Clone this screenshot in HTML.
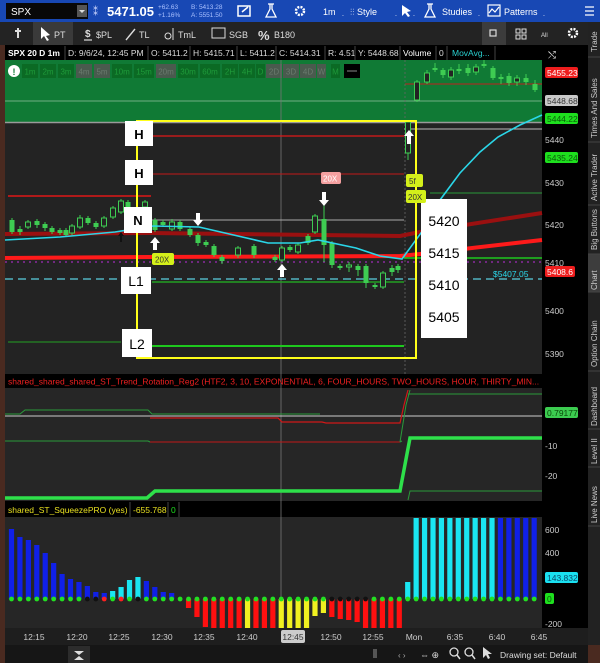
<!DOCTYPE html>
<html><head><meta charset="utf-8"><style>
html,body{margin:0;padding:0;background:#1a1a1a;width:600px;height:663px;overflow:hidden}
svg{display:block}
text{font-family:"Liberation Sans",sans-serif}
</style></head><body>
<svg id="s" width="600" height="663" viewBox="0 0 600 663" xmlns="http://www.w3.org/2000/svg">
<!-- backgrounds -->
<rect x="0" y="0" width="600" height="663" fill="#4a2a20"/>
<rect x="0" y="0" width="600" height="22" fill="#1848b4"/>
<rect x="0" y="22" width="588" height="23" fill="#232323"/>
<rect x="33" y="22" width="40" height="23" fill="#3a3a3a"/>
<rect x="482" y="22" width="24" height="23" fill="#3c3c3c"/>
<rect x="5" y="45" width="537" height="15" fill="#000"/>
<rect x="542" y="45" width="46" height="600" fill="#000"/>
<rect x="588" y="22" width="12" height="623" fill="#222"/>
<rect x="588" y="254" width="12" height="38" fill="#3d3d3d"/>
<rect x="5" y="60" width="537" height="62" fill="#107a35"/>
<rect x="5" y="122" width="537" height="252" fill="#232323"/>
<rect x="5" y="374" width="537" height="14" fill="#000"/>
<rect x="5" y="388" width="537" height="113" fill="#262626"/>
<rect x="5" y="501" width="537" height="16" fill="#000"/>
<rect x="5" y="517" width="537" height="111" fill="#262626"/>
<rect x="5" y="628" width="583" height="17" fill="#1e1e1e"/>
<rect x="5" y="645" width="583" height="18" fill="#161616"/>
<rect x="68" y="646" width="22" height="17" fill="#2c2c2c"/>

<!-- top bar -->
<rect x="6" y="3" width="82" height="16" fill="#080808"/>
<rect x="77" y="5" width="10" height="12" fill="#555"/>
<path d="M79 10h6l-3 3z" fill="#ddd"/>
<text x="11" y="15" font-size="10" fill="#fff">SPX</text>
<text x="93" y="15" font-size="10" fill="#cfd8ff">⁑</text>
<text x="107" y="16" font-size="13" font-weight="bold" fill="#fff">5471.05</text>
<text x="158" y="9" font-size="6.5" fill="#a9c0ff">+62.63</text>
<text x="158" y="17" font-size="6.5" fill="#a9c0ff">+1.16%</text>
<text x="191" y="9" font-size="6.5" fill="#a9c0ff">B: 5413.28</text>
<text x="191" y="17" font-size="6.5" fill="#a9c0ff">A: 5551.50</text>
<rect x="238" y="6" width="12" height="10" fill="none" stroke="#fff" stroke-width="1.5"/>
<path d="M242 12l6-5" stroke="#fff" stroke-width="1.5"/>
<path d="M268 4h6M270 4v5l-4 8h10l-4-8v-5" fill="none" stroke="#fff" stroke-width="1.3"/>
<circle cx="300" cy="11" r="4" fill="none" stroke="#fff" stroke-width="2.5" stroke-dasharray="2 1.2"/>
<text x="323" y="15" font-size="9" fill="#fff">1m</text>
<text x="342" y="16" font-size="7" fill="#fff">.</text>
<text x="350" y="15" font-size="9" fill="#fff">⫶⫶ Style</text>
<text x="395" y="16" font-size="7" fill="#fff">.</text>
<path d="M402 5l0 11 3-3 3 4 2-1-3-4 4-1z" fill="#fff"/>
<text x="413" y="16" font-size="7" fill="#fff">.</text>
<path d="M427 4h6M429 4v5l-4 8h10l-4-8v-5" fill="none" stroke="#fff" stroke-width="1.3"/>
<text x="442" y="15" font-size="9" fill="#fff">Studies</text>
<text x="478" y="16" font-size="7" fill="#fff">.</text>
<rect x="488" y="5" width="12" height="11" fill="none" stroke="#fff" stroke-width="1.2"/>
<path d="M489 13l3-4 3 3 4-5" fill="none" stroke="#fff" stroke-width="1.2"/>
<text x="504" y="15" font-size="9" fill="#fff">Patterns</text>
<text x="543" y="16" font-size="7" fill="#fff">.</text>
<path d="M585 7h9M585 11h9M585 15h9" stroke="#fff" stroke-width="1.3"/>

<!-- toolbar 2 -->
<path d="M18 28v10M15 31h6" stroke="#ddd" stroke-width="2"/>
<path d="M41 27l0 12 3-3 3 5 2-1-3-4 4-1z" fill="#fff"/>
<text x="54" y="38" font-size="9" fill="#ddd">PT</text>
<text x="85" y="37" font-size="10" font-weight="bold" fill="#ddd">$</text>
<path d="M84 40h8" stroke="#ddd" stroke-width="1.2"/>
<text x="96" y="38" font-size="9" fill="#ddd">$PL</text>
<path d="M126 40l9-11" stroke="#ddd" stroke-width="1.4"/>
<text x="139" y="38" font-size="9" fill="#ddd">TL</text>
<circle cx="168" cy="36" r="3" fill="none" stroke="#ddd"/>
<path d="M173 28v12" stroke="#ddd"/>
<text x="178" y="38" font-size="9" fill="#ddd">TmL</text>
<rect x="212" y="28" width="13" height="10" fill="none" stroke="#ddd"/>
<text x="229" y="38" font-size="9" fill="#ddd">SGB</text>
<text x="258" y="40" font-size="13" font-weight="bold" fill="#ddd">%</text>
<text x="274" y="38" font-size="9" fill="#ddd">B180</text>
<rect x="490" y="30" width="6" height="6" fill="none" stroke="#ddd" stroke-width="1.2"/>
<rect x="516" y="29" width="4" height="4" fill="none" stroke="#ddd"/><rect x="522" y="29" width="4" height="4" fill="none" stroke="#ddd"/>
<rect x="516" y="35" width="4" height="4" fill="none" stroke="#ddd"/><rect x="522" y="35" width="4" height="4" fill="none" stroke="#ddd"/>
<text x="541" y="37" font-size="6" fill="#ddd">All</text>
<circle cx="573" cy="33" r="4" fill="none" stroke="#fff" stroke-width="2.5" stroke-dasharray="2 1.2"/>

<!-- info row -->
<g font-size="8.5" fill="#ddd">
<text x="8" y="56" font-weight="bold" fill="#fff">SPX 20 D 1m</text>
<text x="68" y="56">D: 9/6/24, 12:45 PM</text>
<text x="151" y="56">O: 5411.2</text>
<text x="193" y="56">H: 5415.71</text>
<text x="240" y="56">L: 5411.2</text>
<text x="279" y="56">C: 5414.31</text>
<text x="328" y="56">R: 4.51</text>
<text x="358" y="56">Y: 5448.68</text>
<text x="403" y="56" fill="#fff">Volume</text>
<text x="439" y="56">0</text>
<text x="452" y="56" fill="#2ad0d0">MovAvg...</text>
</g>
<g stroke="#444" stroke-width="1">
<path d="M65 46v14M148 46v14M190 46v14M237 46v14M276 46v14M325 46v14M355 46v14M400 46v14M436 46v14M447 46v14M495 46v14"/>
</g>
<text x="548" y="58" font-size="10" fill="#ddd">⤭</text>

<!-- timeframe buttons -->
<circle cx="14" cy="71" r="6" fill="#fff"/>
<text x="12.5" y="75" font-size="9" font-weight="bold" fill="#107a35">!</text>
<g id="tf"></g>

<!-- chart lines -->
<path d="M5 101H542" stroke="#6fae82" stroke-width="1"/>
<path d="M5 122.5H542" stroke="#9a9a9a" stroke-width="1.5"/>
<path d="M405 84H542" stroke="#c02020" stroke-width="1"/>
<path d="M404 129H542" stroke="#bbb" stroke-width="1"/>
<path d="M281 60V628" stroke="#777" stroke-width="0.8"/>
<path d="M405 60V374" stroke="#666" stroke-width="0.8" stroke-dasharray="2 2"/>
<path d="M152 136H404" stroke="#e01818" stroke-width="1.2"/>
<path d="M152 174H404" stroke="#c01818" stroke-width="1"/>
<path d="M8 196H151" stroke="#e01818" stroke-width="1.5"/>
<path d="M152 220H404" stroke="#aaa" stroke-width="1"/>
<path d="M430 193H542" stroke="#2a9a3a" stroke-width="1"/>
<path d="M5 262H542" stroke="#8a2aa0" stroke-width="1.5" stroke-dasharray="2 4"/>
<path d="M5 234L150 233L400 236L420 232L542 213" stroke="#9a1010" stroke-width="4" fill="none"/>
<path d="M5 258L150 257L400 256L420 254L542 240" stroke="#ff1a1a" stroke-width="4" fill="none"/>
<path d="M404 258H542" stroke="#1ec81e" stroke-width="1.5"/>
<path d="M5 279H542" stroke="#5ad0e0" stroke-width="1.2" stroke-dasharray="8 5"/>
<path d="M152 282H404" stroke="#23a023" stroke-width="1.5"/>
<path d="M8 342H121" stroke="#23a023" stroke-width="1"/>
<path d="M152 346H404" stroke="#1ec81e" stroke-width="2"/>
<g id="candles"></g>
<path d="M5 240L60 237L115 232L153 226L199 227L268 243L300 243L318 240L356 248L380 256L402 259L421 233L440 200L460 173L480 152L498 137L520 125L542 115" stroke="#2ad6e8" stroke-width="1.6" fill="none"/>

<!-- yellow box -->
<rect x="137" y="121" width="279" height="237" fill="none" stroke="#ffff1a" stroke-width="2"/>
<!-- label boxes -->
<g font-size="13" font-weight="bold" fill="#000" text-anchor="middle">
<rect x="125" y="121" width="28" height="25" fill="#fff"/><text x="139" y="139">H</text>
<rect x="125" y="160" width="28" height="25" fill="#fff"/><text x="139" y="178">H</text>
<rect x="124" y="207" width="28" height="26" fill="#fff"/><text x="138" y="225">N</text>
<rect x="121" y="267" width="30" height="27" fill="#fff"/><text x="136" y="286" font-weight="normal" font-size="14">L1</text>
<rect x="122" y="329" width="30" height="28" fill="#fff"/><text x="137" y="349" font-weight="normal" font-size="14">L2</text>
<rect x="421" y="199" width="46" height="139" fill="#fff"/>
<g font-size="14" font-weight="normal"><text x="444" y="226">5420</text><text x="444" y="258">5415</text><text x="444" y="290">5410</text><text x="444" y="322">5405</text></g>
</g>
<!-- arrows -->
<g fill="#fff">
<path d="M155 237l-5 6h3v7h4v-7h3z"/>
<path d="M282 264l-5 6h3v7h4v-7h3z"/>
<path d="M409 130l-5 6h3v8h4v-8h3z"/>
<path d="M198 226l-5-6h3v-7h4v7h3z"/>
<path d="M324 206l-5-6h3v-8h4v8h3z"/>
</g>
<path d="M121 232l-3 4h2v6h2v-6h2z" fill="#111"/>
<rect x="152" y="253" width="22" height="12" rx="2" fill="#d4f01a"/>
<text x="155" y="262.5" font-size="8" fill="#333">20X</text>
<rect x="321" y="172" width="20" height="12" rx="2" fill="#f4a0a0"/>
<text x="323" y="181.5" font-size="8" fill="#fff">20X</text>
<rect x="406" y="174" width="17" height="13" rx="2" fill="#d4f01a"/>
<text x="409" y="184" font-size="8" fill="#333">5f</text>
<rect x="406" y="190" width="20" height="13" rx="2" fill="#d4f01a"/>
<text x="408" y="200" font-size="8" fill="#333">20X</text>

<!-- price axis -->
<g font-size="8.5">
<rect x="545" y="67" width="33" height="11" rx="2" fill="#ee1d1d"/><text x="547" y="76" fill="#fff">5455.23</text>
<rect x="545" y="95" width="33" height="11" rx="2" fill="#c8c8c8"/><text x="547" y="104" fill="#333">5448.68</text>
<rect x="545" y="113" width="33" height="11" rx="2" fill="#1ee01e"/><text x="547" y="122" fill="#0a5a0a">5444.22</text>
<text x="545" y="143" fill="#ccc">5440</text>
<rect x="545" y="152" width="33" height="11" rx="2" fill="#1ee01e"/><text x="547" y="161" fill="#0a5a0a">5435.24</text>
<text x="545" y="186" fill="#ccc">5430</text>
<text x="545" y="228" fill="#ccc">5420</text>
<text x="545" y="266" fill="#ccc">5410</text>
<rect x="545" y="266" width="30" height="11" rx="2" fill="#ee1d1d"/><text x="547" y="275" fill="#fff">5408.6</text>
<text x="493" y="277" fill="#2ad6e8">$5407.05</text>
<text x="545" y="314" fill="#ccc">5400</text>
<text x="545" y="357" fill="#ccc">5390</text>
<rect x="545" y="407" width="33" height="11" rx="2" fill="#3ccc50"/><text x="547" y="416" fill="#0a4a0a">0.79177</text>
<text x="545" y="449" fill="#ccc">-10</text>
<text x="545" y="479" fill="#ccc">-20</text>
<text x="545" y="533" fill="#ccc">600</text>
<text x="545" y="556" fill="#ccc">400</text>
<text x="545" y="578" fill="#666">200</text>
<rect x="545" y="572" width="33" height="11" rx="2" fill="#1ae0f0"/><text x="547" y="581" fill="#0a4a6a">143.832</text>
<rect x="545" y="593" width="9" height="11" rx="2" fill="#1ee01e"/><text x="547" y="602" fill="#0a5a0a">0</text>
<text x="545" y="627" fill="#ccc">-200</text>
</g>

<!-- indicator 1 -->
<text x="8" y="384.5" font-size="8.5" fill="#ee2020">shared_shared_shared_ST_Trend_Rotation_Reg2 (HTF2, 3, 10, EXPONENTIAL, 6, FOUR_HOURS, TWO_HOURS, HOUR, THIRTY_MIN...</text>
<path d="M5 416H542" stroke="#ccc" stroke-width="1"/>
<path d="M5 414L20 414L25 410L148 410L152 414L316 414L320 414" stroke="#2a9a3a" stroke-width="1" fill="none"/>
<path d="M150 418L278 418L282 422L322 422L326 423L400 423L404 405L408 390" stroke="#d01818" stroke-width="1.2" fill="none"/>
<path d="M408 394H542" stroke="#2a9a3a" stroke-width="1"/>
<path d="M5 441H148L150 442H400L402 441" stroke="#2a9a3a" stroke-width="1" fill="none"/>
<path d="M150 442H400" stroke="#c01818" stroke-width="1"/>
<path d="M400 442L406 405L410 390" stroke="#2a9a3a" stroke-width="1" fill="none"/>
<path d="M5 498H147L155 491H400L410 438H542" stroke="#2ee04a" stroke-width="3.5" fill="none"/>
<path d="M408 500L410 491H542" stroke="#2a9a3a" stroke-width="1" fill="none"/>

<!-- indicator 2 -->
<text x="8" y="513" font-size="8.5" fill="#e8e020">shared_ST_SqueezePRO (yes)</text>
<path d="M130 502v15M168 502v15M179 502v15" stroke="#444"/>
<text x="133" y="513" font-size="8.5" fill="#e8e020">-655.768</text>
<text x="171" y="513" font-size="8.5" fill="#1ee01e">0</text>
<g id="bars"></g>

<!-- time axis -->
<g font-size="8.5" fill="#ccc" text-anchor="middle">
<text x="34" y="640">12:15</text><text x="77" y="640">12:20</text><text x="119" y="640">12:25</text><text x="162" y="640">12:30</text><text x="204" y="640">12:35</text><text x="247" y="640">12:40</text>
<rect x="281" y="630" width="24" height="13" rx="2" fill="#ccc"/><text x="293" y="640" fill="#333">12:45</text>
<text x="331" y="640">12:50</text><text x="373" y="640">12:55</text><text x="414" y="640">Mon</text><text x="455" y="640">6:35</text><text x="497" y="640">6:40</text><text x="539" y="640">6:45</text>
</g>
<!-- bottom bar -->
<path d="M74 651h10l-5 4z M74 660h10l-5-4z" fill="#ddd"/>
<rect x="373" y="649" width="4" height="9" fill="#555"/>
<text x="398" y="658" font-size="8" fill="#aaa">‹ ›</text>
<text x="420" y="658" font-size="9" fill="#ddd">⇔ ⊕</text>
<circle cx="454" cy="652" r="4" fill="none" stroke="#ddd" stroke-width="1.3"/><path d="M457 655l3 4" stroke="#ddd" stroke-width="1.5"/>
<circle cx="469" cy="652" r="4" fill="none" stroke="#ddd" stroke-width="1.3"/><path d="M472 655l3 4" stroke="#ddd" stroke-width="1.5"/>
<path d="M483 647l0 11 3-3 2 4 2-1-2-4 4 0z" fill="#ddd"/>
<text x="500" y="658" font-size="8.5" fill="#ddd">Drawing set: Default</text>

<!-- sidebar -->
<g font-size="8" fill="#ccc">
<text transform="translate(597,52) rotate(-90)">Trade</text>
<text transform="translate(597,138) rotate(-90)">Times And Sales</text>
<text transform="translate(597,201) rotate(-90)">Active Trader</text>
<text transform="translate(597,250) rotate(-90)">Big Buttons</text>
<text transform="translate(597,290) rotate(-90)">Chart</text>
<text transform="translate(597,367) rotate(-90)">Option Chain</text>
<text transform="translate(597,426) rotate(-90)">Dashboard</text>
<text transform="translate(597,464) rotate(-90)">Level II</text>
<text transform="translate(597,523) rotate(-90)">Live News</text>
</g>
<path d="M588 57h12M588 142h12M588 205h12M588 254h12M588 292h12M588 371h12M588 429h12M588 467h12M588 526h12" stroke="#444"/>
</svg>
<script>
var NS="http://www.w3.org/2000/svg";
function el(p,t,a){var e=document.createElementNS(NS,t);for(var k in a)e.setAttribute(k,a[k]);document.getElementById(p).appendChild(e);return e;}
// timeframe buttons
var tf=[["1m",22,0],["2m",40,0],["3m",58,0],["4m",76,1],["5m",94,1],["10m",112,0],["15m",134,0],["20m",156,1],["30m",178,0],["60m",200,0],["2H",222,0],["4H",239,0],["D",256,0],["2D",266,1],["3D",283,1],["4D",300,1],["W",317,1],["M",331,0]];
tf.forEach(function(b){var w=b[0].length>2?20:(b[0].length==1?9:16);el("tf","rect",{x:b[1],y:64,width:w,height:14,fill:b[2]?"#4a5a4e":"#0b6a24"});var t=el("tf","text",{x:b[1]+w/2,y:74.5,"font-size":8,fill:b[2]?"#6a7a6e":"#1f9a3a","text-anchor":"middle"});t.textContent=b[0];});
el("tf","rect",{x:344,y:64,width:16,height:14,fill:"#000"});el("tf","path",{d:"M347 71h10",stroke:"#888"});
// candles [x, top, bottom, hollow, wickTop, wickBot]
var c=[[12,220,232,0,218,234],[20,229,232,0,226,235],[28,222,227,1,220,229],[37,221,225,0,219,228],[45,224,228,0,222,231],[52,228,232,0,226,234],[60,230,233,0,228,235],[66,230,235,0,228,237],[72,226,233,1,224,235],[80,218,227,1,215,229],[88,218,223,0,216,225],[96,223,227,0,221,229],[104,218,226,1,216,228],[113,208,217,1,206,219],[121,201,212,1,199,214],[128,202,207,0,200,209],[145,202,207,1,200,209],[155,220,230,0,218,232],[163,222,225,0,220,227],[172,222,229,1,219,231],[180,222,229,0,220,231],[190,229,235,0,227,237],[198,235,243,0,233,246],[206,242,245,0,240,247],[214,246,255,0,244,257],[222,257,261,0,255,264],[238,248,255,1,246,258],[254,246,255,0,244,258],[275,257,260,0,255,262],[282,248,260,1,246,262],[290,247,250,0,245,252],[298,245,252,1,243,254],[308,236,243,0,234,245],[315,216,232,1,214,234],[324,219,245,0,200,262],[332,243,265,0,241,268],[340,266,268,0,264,270],[349,265,267,1,262,272],[358,266,270,0,264,276],[366,266,283,0,264,288],[375,285,287,0,283,289],[383,273,287,1,271,289],[392,268,272,0,265,276],[398,266,270,0,264,273],
[408,122,153,1,120,160],[417,82,100,1,80,102],[427,73,82,1,70,84],[435,68,70,0,63,72],[443,70,75,0,68,78],[451,70,77,1,67,80],[459,69,71,0,64,74],[468,68,73,0,64,76],[476,67,72,1,64,75],[484,64,66,0,60,68],[493,68,78,0,66,80],[501,77,79,0,74,84],[509,76,83,0,73,86],[517,78,82,1,75,86],[526,78,82,0,74,85],[535,84,90,0,80,92]];
c.forEach(function(k){var col="#3ecc52";el("candles","path",{d:"M"+k[0]+" "+k[4]+"V"+k[5],stroke:col,"stroke-width":1});el("candles","rect",{x:k[0]-2.5,y:k[1],width:5,height:Math.max(1.5,k[2]-k[1]),fill:k[3]?"#232323":col,stroke:col,"stroke-width":k[3]?1:0});});
// squeeze bars
var tops=[529,537,540,545,553,563,574,579,582,586,592,593,591,587,580,577,581,587,592,593,599,608,617,627,629,629,629,629,629,629,629,629,629,629,629,629,616,613,617,619,620,622,629,629,629,629,629,582];
var cols="BBBBBBBBBBBBCCCCBBBB_RRRRRRRYRRRYYYYYYRRRRRRRRRC";
for(var i=0;i<63;i++){var x=11.5+i*8.43,t,cl;
 if(i<tops.length){t=tops[i];cl=cols[i];}else{t=518;cl=i<58?"C":"B";}
 var f={B:"#1020e8",C:"#1ae6f2",R:"#ff1010",Y:"#f0f020"}[cl];
 if(cl!="_"){ if(t<599) el("bars","rect",{x:x-2.6,y:t,width:5.2,height:599-t,fill:f}); else el("bars","rect",{x:x-2.6,y:599,width:5.2,height:Math.min(t,628)-599,fill:f});}
 var dc="#22e022"; if(i==9||i==10||i==15||(i>=38&&i<=42))dc="#111"; if(i==11||i==13)dc="#ff2020";
 el("bars","circle",{cx:x,cy:599,r:2.4,fill:dc});}
</script>
</body></html>
